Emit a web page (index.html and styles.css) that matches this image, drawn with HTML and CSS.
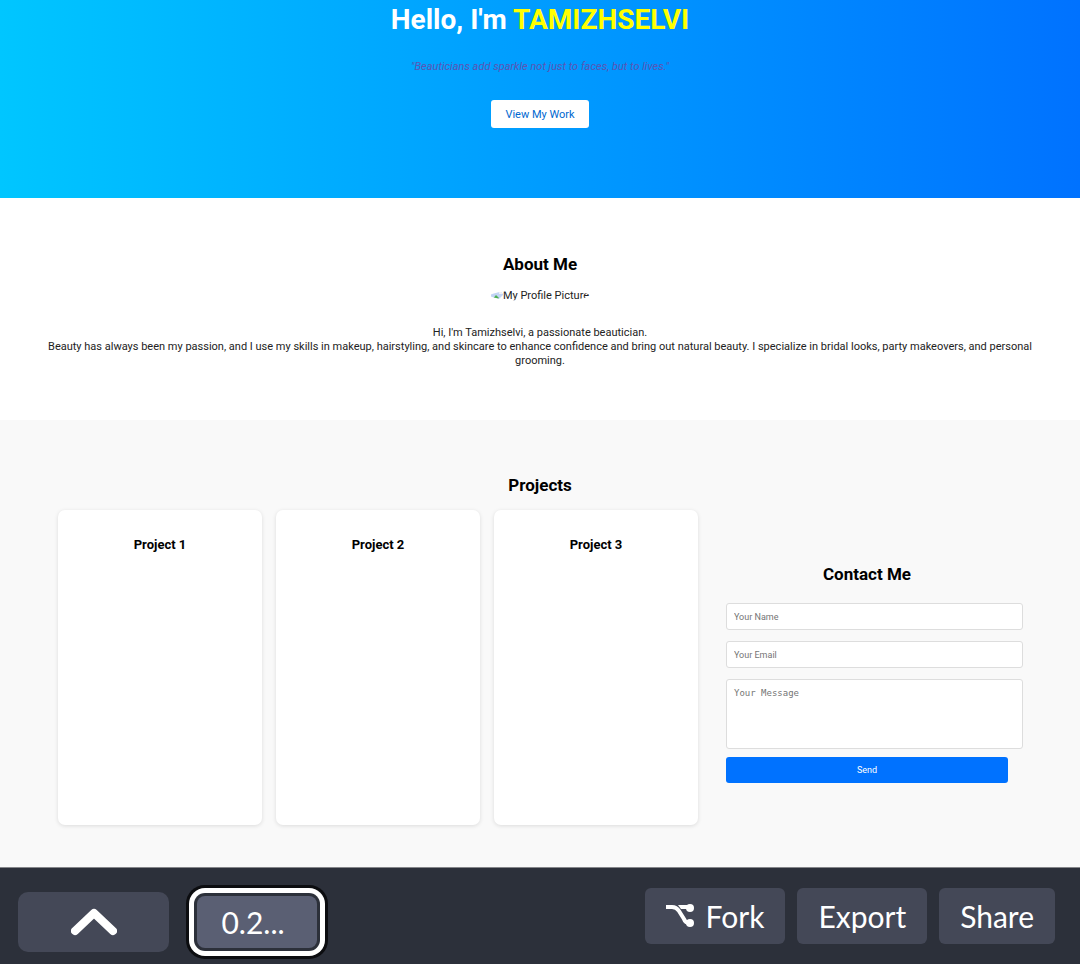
FILE: index.html
```html
<!DOCTYPE html>
<html lang="en">
<head>
<meta charset="utf-8">
<meta name="viewport" content="width=device-width, initial-scale=1">
<title>Tamizhselvi | Portfolio</title>
<link rel="stylesheet" href="styles.css">
</head>
<body>
<header class="hero">
  <h1 class="hero-title">Hello, I'm <span class="hero-name">TAMIZHSELVI</span></h1>
  <p class="hero-quote">"Beauticians add sparkle not just to faces, but to lives."</p>
  <a class="hero-link" href="#projects">View My Work</a>
</header>
<main class="content">
  <section class="about">
    <h2 class="section-title">About Me</h2>
    <div class="profile" role="img" aria-label="My Profile Picture">
      <svg class="broken-image" viewBox="0 0 12 12" aria-hidden="true">
        <path d="M0 0h8l4 4v8H0z" fill="#c3d5f5"/>
        <path d="M8 0v4h4z" fill="#eef2f8"/>
        <path d="M1 10l4-5 3 3-2 3z" fill="#4caf50"/>
        <path d="M6 11l6-6v7H6z" fill="#fff"/>
      </svg><span>My Profile Picture</span>
    </div>
    <p class="about-text">Hi, I'm Tamizhselvi, a passionate beautician.<br>Beauty has always been my passion, and I use my skills in makeup, hairstyling, and skincare to enhance confidence and bring out natural beauty. I specialize in bridal looks, party makeovers, and personal grooming.</p>
  </section>
  <section class="projects" id="projects">
    <h2 class="section-title">Projects</h2>
    <div class="project-grid">
      <article class="card"><h3 class="card-title">Project 1</h3></article>
      <article class="card"><h3 class="card-title">Project 2</h3></article>
      <article class="card"><h3 class="card-title">Project 3</h3></article>
      <section class="contact">
        <h2 class="section-title">Contact Me</h2>
        <form class="contact-form">
          <input class="field" type="text" placeholder="Your Name" aria-label="Your Name">
          <input class="field" type="email" placeholder="Your Email" aria-label="Your Email">
          <textarea class="field field-message" placeholder="Your Message" aria-label="Your Message"></textarea>
          <button class="send" type="submit">Send</button>
        </form>
      </section>
    </div>
  </section>
</main>
<footer class="toolbar">
  <button class="tool tool-toggle" type="button" aria-label="Expand">
    <svg class="chevron" viewBox="0 0 46 28" aria-hidden="true"><path d="M4 23L23 5l19 18" fill="none" stroke="#fff" stroke-width="8" stroke-linecap="round" stroke-linejoin="round"/></svg>
  </button>
  <button class="tool tool-zoom" type="button">0.2...</button>
  <div class="actions">
    <button class="tool tool-action" type="button">
      <svg class="fork" viewBox="0 0 28 26" aria-hidden="true">
        <path d="M0 4h6c3 0 5 1 7 4l5 8c1 3 3 4 6 4" fill="none" stroke="#fff" stroke-width="4"/>
        <path d="M12 2h12v4H15z" fill="#fff"/>
        <circle cx="24" cy="5" r="4" fill="#fff"/><circle cx="24" cy="20" r="4" fill="#fff"/>
      </svg>Fork</button>
    <button class="tool tool-action" type="button">Export</button>
    <button class="tool tool-action" type="button">Share</button>
  </div>
</footer>
</body>
</html>
```
FILE: styles.css
```css
* { box-sizing: border-box; }

body {
  display: flex;
  flex-direction: column;
  min-height: 100vh;
  margin: 0;
  background: #f9f9f9;
  color: #222;
  font-family: Roboto, sans-serif;
  font-size: 11px;
  line-height: 14px;
  text-align: center;
}

.hero {
  padding: 3px 36px 70px;
  background: linear-gradient(to right, #00c6ff, #0072ff);
}
.hero-title {
  margin: 0 0 23px;
  color: #fff;
  font-size: 28px;
  line-height: 34px;
}
.hero-name { color: #ff0; }
.hero-quote {
  margin: 0 0 26px;
  color: #5c55b4;
  font-style: italic;
}
.hero-link {
  display: inline-block;
  padding: 8px 14px 6px;
  border-radius: 3px;
  background: #fff;
  color: #0068d0;
  text-decoration: none;
}

.content { flex: 1; }
.section-title {
  margin: 0;
  color: #000;
  font-size: 17px;
  line-height: 20px;
}

.about {
  padding: 56px 28px 52px;
  background: #fff;
}
.profile {
  display: flex;
  justify-content: center;
  align-items: center;
  width: 100px;
  height: 11px;
  margin: 16px auto 25px;
  border-radius: 50%;
  overflow: hidden;
  white-space: nowrap;
}
.broken-image {
  flex: none;
  width: 12px;
  height: 12px;
}
.about-text { margin: 0; }

.projects { padding: 55px 58px 42px; }
.project-grid {
  display: grid;
  grid-template-columns: repeat(3, 204fr) 310fr;
  gap: 14px;
  margin-top: 15px;
}
.card {
  min-height: 315px;
  padding: 27px 14px;
  border-radius: 7px;
  background: #fff;
  box-shadow: 0 1px 4px rgba(0, 0, 0, 0.12);
}
.card-title {
  margin: 0;
  color: #000;
  font-size: 13px;
  line-height: 16px;
}

.contact {
  align-self: center;
  padding: 26px 14px 14px;
}
.contact-form {
  display: flex;
  flex-direction: column;
  margin-top: 19px;
}
.field {
  width: calc(100% + 15px);
  height: 27px;
  margin: 0 0 11px;
  padding: 0 7px;
  border: 1px solid #ddd;
  border-radius: 3px;
  background: #fff;
  font: 9px/12px Roboto, sans-serif;
}
.field::placeholder { color: #757575; }
.field-message {
  height: 70px;
  margin-bottom: 8px;
  padding: 7px;
  font-family: "DejaVu Sans Mono", monospace;
  resize: none;
}
.send {
  height: 26px;
  padding: 0;
  border: 0;
  border-radius: 3px;
  background: #0072ff;
  color: #fff;
  font: 9px/12px Roboto, sans-serif;
}

.toolbar {
  display: flex;
  align-items: center;
  gap: 28px;
  padding: 20px 25px 8px 18px;
  border-top: 1px solid #85868a;
  background: #2c303a;
}
.tool {
  border: 0;
  border-radius: 6px;
  background: #444857;
  color: #fff;
  font: 30px/36px Lato, sans-serif;
}
.tool-toggle {
  width: 151px;
  height: 60px;
  padding: 0;
  border-radius: 10px;
}
.chevron {
  display: block;
  width: 46px;
  height: 28px;
  margin: 0 auto;
}
.tool-zoom {
  width: 120px;
  height: 52px;
  padding: 0 8px 0 0;
  border-radius: 8px;
  background: #5a5f73;
  box-shadow: 0 0 0 3px #2c303a, 0 0 0 8px #fff, 0 0 0 11px #0c0d10;
}
.actions {
  display: flex;
  gap: 12px;
  margin: 0 0 12px auto;
}
.tool-action {
  display: flex;
  align-items: center;
  gap: 12px;
  height: 56px;
  padding: 0 21px;
}
.fork {
  width: 28px;
  height: 26px;
}
```
